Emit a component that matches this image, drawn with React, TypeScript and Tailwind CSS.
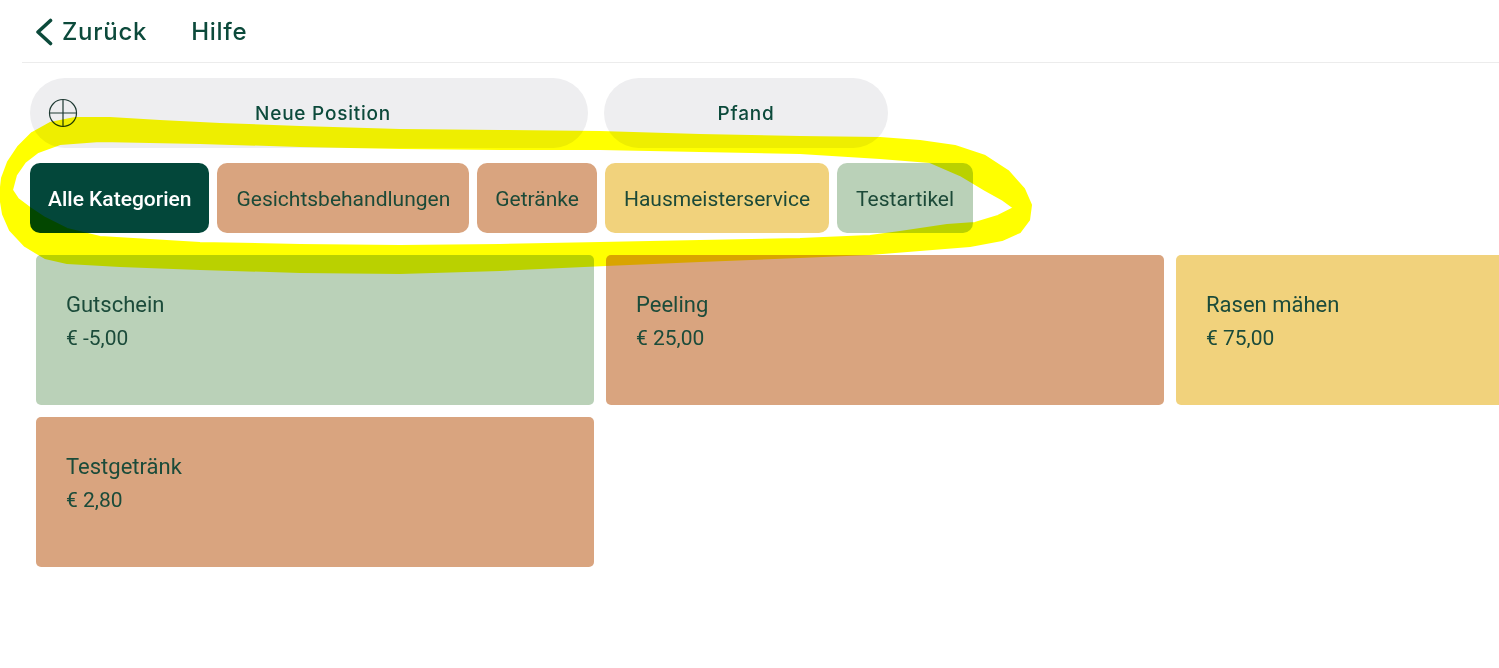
const categories = [
  { label: "Alle Kategorien", color: "bg-[#03473a] text-white font-medium px-[18px]" },
  { label: "Gesichtsbehandlungen", color: "bg-[#d9a47f] text-[#1c4a38] px-[19px]" },
  { label: "Getränke", color: "bg-[#d9a47f] text-[#1c4a38] px-[18px]" },
  { label: "Hausmeisterservice", color: "bg-[#f1d27c] text-[#1c4a38] px-[19px]" },
  { label: "Testartikel", color: "bg-[#bad1b8] text-[#1c4a38] px-[19px]" },
];

const articles = [
  { name: "Gutschein", price: "€ -5,00", color: "bg-[#bad1b8]" },
  { name: "Peeling", price: "€ 25,00", color: "bg-[#d9a47f]" },
  { name: "Rasen mähen", price: "€ 75,00", color: "bg-[#f1d27c]" },
  { name: "Testgetränk", price: "€ 2,80", color: "bg-[#d9a47f]" },
];

// hand-drawn highlighter loop on top of the screenshot
const Highlight = () => (
  <svg
    className="absolute left-0 top-0 pointer-events-none mix-blend-multiply"
    width="1100"
    height="300"
    viewBox="0 0 1100 300"
  >
    <path
      fill="#ffff00"
      fillRule="evenodd"
      stroke="#ffff00"
      strokeWidth="2"
      strokeLinejoin="round"
      d="M 0 196 L 2 178 L 8 162 L 18 147 L 32 133 L 50 123 L 75 118 L 110 118 L 160 121 L 220 124 L 300 127 L 400 130 L 500 131 L 600 132 L 700 135 L 800 137 L 880 138 L 920 141 L 955 146 L 985 156 L 1008 171 L 1024 189 L 1031 205 L 1029 220 L 1020 232 L 1002 240 L 970 246 L 920 250 L 870 254 L 800 257 L 700 261 L 606 265 L 500 270 L 400 273 L 300 272 L 200 269 L 120 266 L 67 263 L 45 258 L 25 246 L 10 230 L 3 214 Z
         M 12 190 L 16 175 L 25 162 L 38 152 L 60 144 L 100 141 L 200 143 L 300 146 L 400 148 L 500 149 L 600 149 L 700 151 L 800 153 L 880 158 L 930 162 L 960 175 L 985 190 L 1003 200 L 1014 208 L 998 216 L 975 223 L 947 225 L 900 232 L 870 236 L 800 239 L 700 241 L 600 243 L 500 245 L 400 246 L 300 245 L 200 243 L 100 237 L 67 229 L 45 218 L 30 208 L 18 199 Z"
    />
  </svg>
);

const App = () => {
  return (
    <div className="relative h-[668px] w-full overflow-hidden bg-white pl-[22px]">
      {/* Header */}
      <div className="flex h-[63px] items-center border-b border-[#ececec] pl-[13px] pt-[2px] font-['Inter',sans-serif] text-[24px] font-medium tracking-[0.03em] text-[#0c4a3b]">
        <svg width="18" height="28" viewBox="0 0 18 28" fill="none" stroke="currentColor" strokeWidth="3.6" strokeLinecap="round" strokeLinejoin="round">
          <path d="M15.5 2.5 L3 14 L15.5 25.5" />
        </svg>
        <span className="ml-[9px]">Zurück</span>
        <span className="ml-[44px]">Hilfe</span>
      </div>

      {/* Actions */}
      <div className="mt-[15px] flex gap-[16px] pl-[8px] font-['Inter',sans-serif] text-[19px] font-medium tracking-[0.04em] text-[#0c4a3b]">
        <button className="flex h-[70px] w-[558px] items-center rounded-full bg-[#eeeef0] pl-[18px] pr-[20px]">
          <svg width="30" height="30" viewBox="0 0 30 30" fill="none" stroke="#1f3a33" strokeWidth="1.2">
            <circle cx="15" cy="15" r="13.5" />
            <path d="M15 1.5 V28.5 M1.5 15 H28.5" />
          </svg>
          <span className="flex-1 pt-[3px] text-center">Neue Position</span>
        </button>
        <button className="flex h-[70px] w-[284px] items-center justify-center rounded-full bg-[#eeeef0] pt-[3px]">
          Pfand
        </button>
      </div>

      {/* Categories */}
      <div className="mt-[15px] flex gap-[8px] pl-[8px] font-['Roboto',sans-serif] text-[21px]">
        {categories.map((cat, idx) => (
          <div
            key={idx}
            className={`flex h-[70px] items-center rounded-[10px] pt-[3px] ${cat.color}`}
          >
            {cat.label}
          </div>
        ))}
      </div>

      {/* Articles */}
      <div className="mt-[22px] grid grid-cols-[repeat(3,558px)] gap-[12px] pl-[14px] font-['Roboto',sans-serif] text-[#1b4b3a]">
        {articles.map((item, idx) => (
          <div key={idx} className={`h-[150px] rounded-[5px] pl-[30px] pt-[35px] ${item.color}`}>
            <div className="text-[22px] leading-[30px]">{item.name}</div>
            <div className="mt-[4px] text-[21px] leading-[28px]">{item.price}</div>
          </div>
        ))}
      </div>

      <Highlight />
    </div>
  );
};

export default App;
